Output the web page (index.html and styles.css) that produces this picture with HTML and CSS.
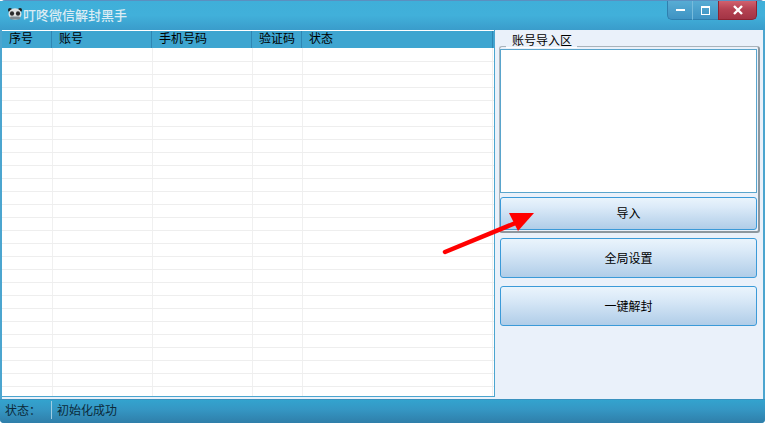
FILE: index.html
```html
<!DOCTYPE html>
<html lang="zh-CN">
<head>
  <meta charset="UTF-8" />
  <title>叮咚微信解封黑手</title>
  <link rel="stylesheet" href="styles.css">
</head>
<body>
  <div class="window">
    <div class="titlebar">
      <svg class="panda" width="14" height="12" viewBox="0 0 14 12">
        <circle cx="2" cy="2" r="2" fill="#1c1c1c"/>
        <circle cx="12" cy="2" r="2" fill="#1c1c1c"/>
        <ellipse cx="7" cy="6" rx="6.5" ry="5.8" fill="#dfe2e2"/>
        <ellipse cx="4" cy="5.5" rx="2.1" ry="2.3" fill="#2a2a2a"/>
        <ellipse cx="10" cy="5.5" rx="2.1" ry="2.3" fill="#2a2a2a"/>
        <rect x="2" y="8.5" width="10" height="3" rx="1.3" fill="#7f8a90"/>
      </svg>
      <span class="title">叮咚微信解封黑手</span>
      <div class="win-buttons">
        <div class="win-btn win-min"><span class="min-glyph"></span></div>
        <div class="win-btn win-max"><span class="max-glyph"></span></div>
        <div class="win-btn win-close">
          <svg width="10" height="10" viewBox="0 0 10 10"><path d="M1 1L9 9M9 1L1 9" stroke="#fff" stroke-width="2.4"/></svg>
        </div>
      </div>
    </div>

    <div class="main">
      <div class="list">
        <div class="list-head">
          <div class="col col-1">序号</div>
          <div class="col col-2">账号</div>
          <div class="col col-3">手机号码</div>
          <div class="col col-4">验证码</div>
          <div class="col col-5">状态</div>
        </div>
        <div class="list-body"></div>
      </div>

      <div class="side">
        <div class="group">
          <div class="group-label">账号导入区</div>
          <textarea class="accounts"></textarea>
          <button class="btn btn-import" type="button">导入</button>
        </div>
        <button class="btn btn-big" type="button">全局设置</button>
        <button class="btn btn-big" type="button">一键解封</button>
      </div>
    </div>

    <div class="statusbar">
      <div class="status-label">状态：</div>
      <div class="status-text">初始化成功</div>
    </div>

    <svg class="arrow" width="100" height="50" viewBox="0 0 100 50">
      <path d="M3 42L76 12" stroke="#f00" stroke-width="4.5" stroke-linecap="round"/>
      <polygon points="92,3 67,3 76,21" fill="#f00"/>
    </svg>
  </div>
</body>
</html>
```
FILE: styles.css
```css
* {
  box-sizing: border-box;
}

html, body {
  margin: 0;
  height: 100%;
}

body {
  font-family: "Noto Sans CJK SC", "Liberation Sans", sans-serif;
  font-size: 12px;
  background: #fff;
  overflow: hidden;
}

.window {
  position: relative;
  width: 765px;
  height: 423px;
  display: flex;
  flex-direction: column;
  background: #4ba5cf;
  border: 2px solid #4ba5cf;
  border-top: 1px solid #5b8fc0;
  border-bottom: none;
  border-radius: 5px 5px 4px 4px;
}

.titlebar {
  height: 29px;
  flex: none;
  display: flex;
  align-items: flex-start;
  margin: 0 -2px;
  padding-left: 8px;
  background: linear-gradient(#3fafd9 0%, #41b0da 50%, #3a9ccb 100%);
}

.panda {
  margin-top: 7px;
}

.title {
  margin: 5px 0 0 1px;
  font-size: 13px;
  line-height: 18px;
  color: #dcecf4;
  font-weight: 500;
}

.win-buttons {
  margin-left: auto;
  margin-right: 8px;
  display: flex;
  height: 19px;
}

.win-btn {
  height: 19px;
  display: flex;
  align-items: center;
  justify-content: center;
  border-bottom: 1px solid #2f7fae;
}

.win-min {
  width: 26px;
  background: linear-gradient(#57acd4, #3f93c3);
  border-left: 1px solid #2f7fae;
  border-right: 1px solid #78bbdb;
  border-radius: 0 0 0 5px;
}

.win-max {
  width: 25px;
  background: linear-gradient(#57acd4, #3f93c3);
}

.win-close {
  width: 39px;
  background: linear-gradient(#d0616e 0%, #b54252 45%, #a33445 100%);
  border: 1px solid #8f2230;
  border-top: none;
  border-radius: 0 0 5px 0;
}

.min-glyph {
  width: 9px;
  height: 2px;
  background: #fff;
}

.max-glyph {
  width: 9px;
  height: 9px;
  border: 1.5px solid #fff;
  border-top-width: 2px;
}

.main {
  flex: 1;
  min-height: 0;
  display: flex;
  background: #eaf1fa;
}

.list {
  width: 494px;
  display: flex;
  flex-direction: column;
  margin-bottom: 2px;
  background: #fff;
  border-right: 1px solid #4ba5cf;
  border-bottom: 1px solid #4ba5cf;
}

.list-head {
  height: 18px;
  flex: none;
  display: flex;
  background: #3ea5d0;
  border-top: 1px solid #fff;
  color: #000;
  line-height: 14px;
}

.col {
  padding-left: 7px;
  border-right: 1px solid #2f86b4;
}

.col-1 { width: 50px; }
.col-2 { width: 100px; }
.col-3 { width: 100px; }
.col-4 { width: 50px; }
.col-5 { flex: 1; margin-right: 1px; }

.list-body {
  flex: 1;
  background:
    repeating-linear-gradient(to bottom, transparent 0, transparent 12px, #eeeeee 12px, #eeeeee 13px),
    linear-gradient(to right, transparent 50px, #f0f0f0 50px, #f0f0f0 51px, transparent 51px, transparent 150px, #f0f0f0 150px, #f0f0f0 151px, transparent 151px, transparent 250px, #f0f0f0 250px, #f0f0f0 251px, transparent 251px, transparent 300px, #f0f0f0 300px, #f0f0f0 301px, transparent 301px, transparent 490px, #f0f0f0 490px, #f0f0f0 491px, transparent 491px);
  background-position: 0 1px, 0 0;
}

.side {
  flex: 1;
  display: flex;
  flex-direction: column;
  padding: 16px 3px 0 4px;
}

.group {
  position: relative;
  padding: 2px 1px 0 0;
  width: 261px;
  height: 187px;
  flex: none;
  border: 1px solid #a9b3ba;
  border-right: 2px solid #8d979e;
  border-bottom: 2px solid #8d979e;
  border-radius: 3px;
}

/* sits on the group's top border */
.group-label {
  position: absolute;
  left: 6px;
  top: -14px;
  padding: 0 5px 0 6px;
  height: 15px;
  line-height: 14px;
  color: #000;
  background: #eaf1fa;
  border-bottom: 1px solid #fff;
}

.accounts {
  display: block;
  width: 257px;
  height: 144px;
  padding: 0;
  resize: none;
  background: #fff;
  border: 1px solid #5aa5cc;
  outline: none;
}

.btn {
  display: block;
  width: 257px;
  padding: 0 0 2px;
  font-family: inherit;
  font-size: 12px;
  color: #000;
  border: 1px solid #3b9ad8;
  border-radius: 3px;
  background: linear-gradient(#eaf4fc 0%, #dbeaf8 30%, #b0cde8 100%);
}

.btn-import {
  height: 33px;
  margin-top: 4px;
}

.btn-big {
  height: 40px;
  margin-top: 8px;
  margin-left: 1px;
  flex: none;
}

.group + .btn-big {
  margin-top: 5px;
}

.statusbar {
  height: 24px;
  flex: none;
  display: flex;
  align-items: center;
  margin: 0 -2px;
  padding: 0 0 3px 5px;
  color: #0b2a3a;
  background: linear-gradient(#33a3ce 0%, #3597c4 40%, #2f7ea9 100%);
  border-top: 1px solid #3a92bf;
  border-radius: 0 0 4px 4px;
}

.status-label {
  width: 47px;
  height: 18px;
  line-height: 18px;
  font-family: "Noto Sans CJK TC", sans-serif;
  border-right: 1px solid #9fcde2;
}

.status-text {
  padding-left: 5px;
  line-height: 18px;
}

/* marker drawn over the screenshot */
.arrow {
  position: absolute;
  left: 440px;
  top: 209px;
}
```
